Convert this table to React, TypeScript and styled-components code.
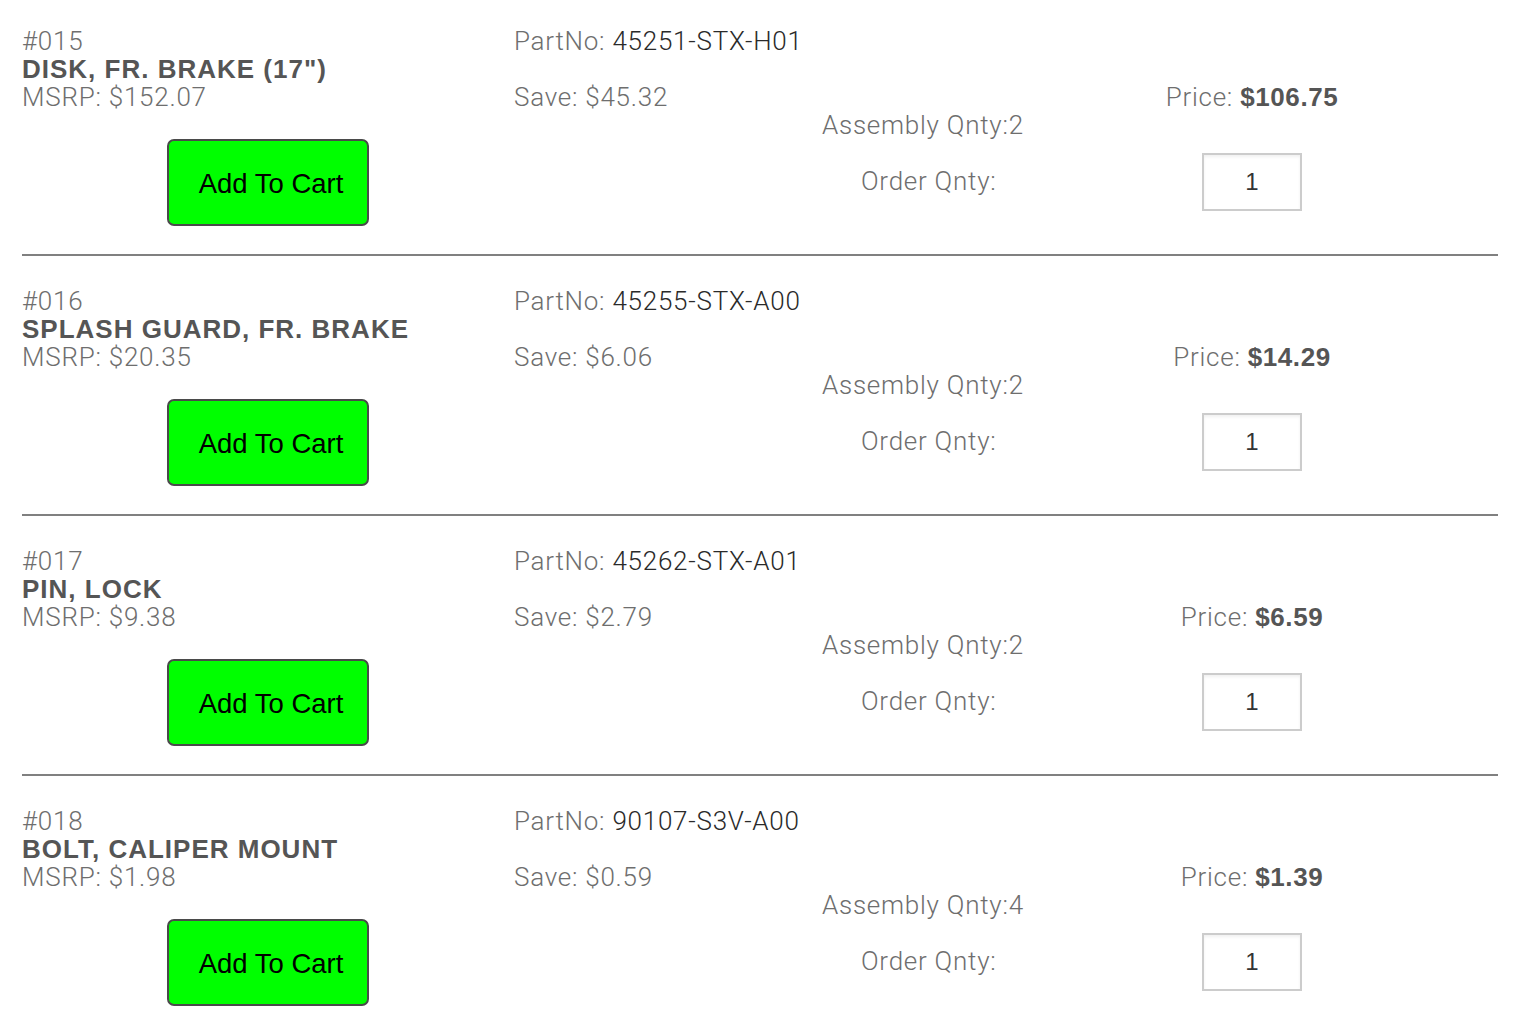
import React from "react";
import styled, { createGlobalStyle } from "styled-components";

const GlobalStyle = createGlobalStyle`
  html, body { margin: 0; padding: 0; background: #ffffff; }
  body { font-family: Roboto, "Liberation Sans", Arial, sans-serif; }
`;

const List = styled.div`
  padding: 27px 30px 0 22px;
  width: 1476px;
`;

const Item = styled.div`
  display: grid;
  grid-template-columns: 492px 308px 184px 492px;
  padding-bottom: 28px;
  border-bottom: 2px solid #808080;
  & + & {
    padding-top: 31px;
  }
`;

const Col = styled.div<{ $top?: number; $center?: boolean }>`
  display: flex;
  flex-direction: column;
  align-items: ${(p) => (p.$center ? "center" : "flex-start")};
  padding-top: ${(p) => p.$top ?? 0}px;
  min-width: 0;
`;

const Line = styled.div<{ $gap?: number; $indent?: number }>`
  font-family: Roboto, "Liberation Sans", Arial, sans-serif;
  font-weight: 300;
  font-size: 26px;
  letter-spacing: 0.75px;
  line-height: 28px;
  height: 28px;
  color: #6e6e6e;
  white-space: nowrap;
  margin-top: ${(p) => p.$gap ?? 0}px;
  margin-left: ${(p) => p.$indent ?? 0}px;
`;

const Value = styled.span`
  color: #2a2a2a;
`;

const Name = styled.div`
  font-family: "Liberation Sans", Arial, sans-serif;
  font-weight: 700;
  font-size: 26px;
  letter-spacing: 1px;
  line-height: 28px;
  height: 28px;
  color: #555555;
  white-space: nowrap;
`;

const Strong = styled.span`
  font-family: "Liberation Sans", Arial, sans-serif;
  font-weight: 700;
  color: #555555;
  letter-spacing: 0.6px;
`;

const CartButton = styled.button`
  align-self: center;
  margin-top: 28px;
  width: 202px;
  height: 87px;
  box-sizing: border-box;
  background: #00ff00;
  border: 2px solid #4a4a4a;
  border-radius: 7px;
  font-family: "Liberation Sans", Arial, sans-serif;
  font-size: 27.5px;
  color: #000000;
  padding: 3px 0 0 6px;
  cursor: pointer;
`;

const QtyInput = styled.input`
  margin-top: 42px;
  width: 100px;
  height: 58px;
  box-sizing: border-box;
  border: 2px solid #cccccc;
  box-shadow: inset 0 2px 3px rgba(0, 0, 0, 0.06);
  font-family: "Liberation Sans", Arial, sans-serif;
  font-size: 24px;
  color: #333333;
  text-align: center;
  padding: 0;
  outline: none;
`;

type Part = {
  no: string;
  name: string;
  msrp: string;
  partNo: string;
  save: string;
  asm: number;
  price: string;
};

const parts: Part[] = [
  { no: "#015", name: 'DISK, FR. BRAKE (17")', msrp: "$152.07", partNo: "45251-STX-H01", save: "$45.32", asm: 2, price: "$106.75" },
  { no: "#016", name: "SPLASH GUARD, FR. BRAKE", msrp: "$20.35", partNo: "45255-STX-A00", save: "$6.06", asm: 2, price: "$14.29" },
  { no: "#017", name: "PIN, LOCK", msrp: "$9.38", partNo: "45262-STX-A01", save: "$2.79", asm: 2, price: "$6.59" },
  { no: "#018", name: "BOLT, CALIPER MOUNT", msrp: "$1.98", partNo: "90107-S3V-A00", save: "$0.59", asm: 4, price: "$1.39" },
];

export default function App() {
  return (
    <>
      <GlobalStyle />
      <List>
        {parts.map((p) => (
          <Item key={p.no}>
            <Col>
              <Line>{p.no}</Line>
              <Name>{p.name}</Name>
              <Line>MSRP: {p.msrp}</Line>
              <CartButton type="button">Add To Cart</CartButton>
            </Col>
            <Col>
              <Line>
                PartNo: <Value>{p.partNo}</Value>
              </Line>
              <Line $gap={28}>Save: {p.save}</Line>
            </Col>
            <Col $top={84}>
              <Line>Assembly Qnty:{p.asm}</Line>
              <Line $gap={28} $indent={39}>Order Qnty:</Line>
            </Col>
            <Col $top={56} $center>
              <Line>
                Price: <Strong>{p.price}</Strong>
              </Line>
              <QtyInput defaultValue="1" />
            </Col>
          </Item>
        ))}
      </List>
    </>
  );
}
